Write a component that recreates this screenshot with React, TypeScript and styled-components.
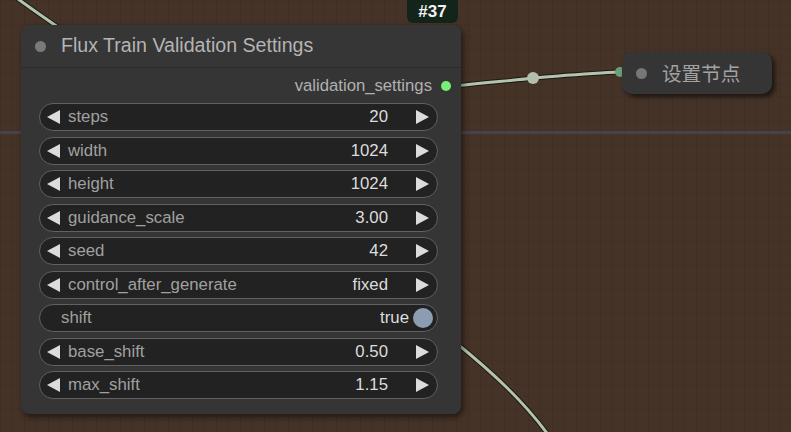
import React from "react";
import styled, { createGlobalStyle } from "styled-components";

const Global = createGlobalStyle`
  html, body { margin: 0; padding: 0; background: #463328; }
  body { font-family: "Liberation Sans", Arial, "Noto Sans CJK SC", sans-serif; }
`;

const Canvas = styled.div`
  position: relative;
  width: 791px;
  height: 432px;
  overflow: hidden;
  background-color: #463328;
  background-image:
    linear-gradient(to bottom, transparent 131px, rgba(70, 72, 92, 0.75) 131px, rgba(70, 72, 92, 0.75) 134px, transparent 134px),
    repeating-linear-gradient(to right, rgba(0, 0, 0, 0.08) 0 1px, transparent 1px 12px),
    repeating-linear-gradient(to bottom, rgba(0, 0, 0, 0.05) 0 1px, transparent 1px 12px);
`;

const Links = styled.svg`
  position: absolute;
  left: 0;
  top: 0;
  width: 791px;
  height: 432px;
`;

const Node = styled.div`
  position: absolute;
  left: 21px;
  top: 25px;
  width: 440px;
  height: 389px;
  box-sizing: border-box;
  background: #353535;
  border-radius: 8px;
  box-shadow: 2px 3px 6px rgba(0, 0, 0, 0.55);
  display: flex;
  flex-direction: column;
`;

const Badge = styled.div`
  position: absolute;
  left: 407px;
  top: -4px;
  width: 51px;
  height: 27px;
  box-sizing: border-box;
  padding-top: 4px;
  background: #13241a;
  border-radius: 6px;
  color: #f2f2f2;
  font-weight: bold;
  font-size: 17px;
  display: flex;
  align-items: center;
  justify-content: center;
`;

const Title = styled.div`
  height: 42px;
  display: flex;
  align-items: center;
  padding-left: 14px;
  gap: 15px;
  border-bottom: 1px solid #2c2c2c;
  border-radius: 8px 8px 0 0;
  background: #363636;
`;

const Dot = styled.div<{ $color: string; $size: number }>`
  width: ${(p) => p.$size}px;
  height: ${(p) => p.$size}px;
  border-radius: 50%;
  background: ${(p) => p.$color};
  flex: none;
`;

const TitleText = styled.span`
  color: #b4b4b4;
  font-size: 19.6px;
  margin-top: -2px;
`;

const OutputRow = styled.div`
  height: 35px;
  display: flex;
  align-items: center;
  justify-content: flex-end;
  padding-right: 10px;
  gap: 9px;
  color: #b0b0b0;
  font-size: 16.7px;
`;

const Widgets = styled.div`
  display: flex;
  flex-direction: column;
  gap: 5.5px;
  padding-left: 18px;
  width: 399px;
`;

const Widget = styled.div`
  height: 28px;
  box-sizing: border-box;
  border: 1px solid #616161;
  border-radius: 14px;
  background: #222222;
  display: flex;
  align-items: center;
  padding: 0 7px 0 6px;
  font-size: 16.8px;
`;

const Arrow = styled.svg`
  width: 15px;
  height: 16px;
  flex: none;
`;

const Label = styled.span<{ $indent?: boolean }>`
  color: #a0a0a0;
  margin-left: ${(p) => (p.$indent ? "15px" : "7px")};
  flex: 1;
  white-space: nowrap;
`;

const Value = styled.span<{ $gap: number }>`
  color: #dcdcdc;
  margin-right: ${(p) => p.$gap}px;
`;

const Toggle = styled.div`
  width: 20px;
  height: 20px;
  border-radius: 50%;
  background: #8d9db1;
  margin-left: 4px;
  margin-right: -3px;
`;

const Collapsed = styled.div`
  position: absolute;
  left: 622px;
  top: 52px;
  width: 150px;
  height: 42px;
  box-sizing: border-box;
  background: #353535;
  border-radius: 10px;
  box-shadow: 3px 3px 5px rgba(0, 0, 0, 0.6);
  display: flex;
  align-items: center;
  padding-left: 14px;
  gap: 15px;
`;

const CollapsedText = styled.span`
  color: #a2a2a2;
  font-size: 19.6px;
  font-family: "Noto Sans CJK SC", sans-serif;
  margin-top: -2px;
`;

const Left = () => (
  <Arrow viewBox="0 0 15 16">
    <polygon points="14,1 14,15 1,8" fill="#dcdcdc" />
  </Arrow>
);
const Right = () => (
  <Arrow viewBox="0 0 15 16">
    <polygon points="1,1 1,15 14,8" fill="#dcdcdc" />
  </Arrow>
);

const rows = [
  { label: "steps", value: "20" },
  { label: "width", value: "1024" },
  { label: "height", value: "1024" },
  { label: "guidance_scale", value: "3.00" },
  { label: "seed", value: "42" },
  { label: "control_after_generate", value: "fixed" },
  { label: "shift", value: "true", toggle: true },
  { label: "base_shift", value: "0.50" },
  { label: "max_shift", value: "1.15" },
];

export default function App() {
  return (
    <>
      <Global />
      <Canvas>
        <Links viewBox="0 0 791 432">
          <g fill="none" strokeLinecap="round">
            <path d="M14 -4 C 30 8, 45 18, 62 30" stroke="#1c1a14" strokeWidth="5" />
            <path d="M14 -4 C 30 8, 45 18, 62 30" stroke="#b3c3ad" strokeWidth="3" />
            <path d="M455 86 C 490 82, 520 80, 533 78 C 560 76, 590 73, 620 72" stroke="#1c1a14" strokeWidth="5" />
            <path d="M455 86 C 490 82, 520 80, 533 78 C 560 76, 590 73, 620 72" stroke="#b3c3ad" strokeWidth="3" />
            <path d="M455 342 C 492 372, 525 402, 552 440" stroke="#1c1a14" strokeWidth="5" />
            <path d="M455 342 C 492 372, 525 402, 552 440" stroke="#b3c3ad" strokeWidth="3" />
          </g>
          <circle cx="533" cy="78" r="6" fill="#b2bfab" />
          <circle cx="620" cy="72" r="5" fill="#6b9f7c" />
        </Links>
        <Badge>#37</Badge>
        <Node>
          <Title>
            <Dot $color="#7a7a7a" $size={11} />
            <TitleText>Flux Train Validation Settings</TitleText>
          </Title>
          <OutputRow>
            validation_settings
            <Dot $color="#77ee77" $size={10} />
          </OutputRow>
          <Widgets>
            {rows.map((r) => (
              <Widget key={r.label}>
                {r.toggle ? null : <Left />}
                <Label $indent={r.toggle}>{r.label}</Label>
                <Value $gap={r.toggle ? 0 : 27}>{r.value}</Value>
                {r.toggle ? <Toggle /> : <Right />}
              </Widget>
            ))}
          </Widgets>
        </Node>
        <Collapsed>
          <Dot $color="#777777" $size={11} />
          <CollapsedText>设置节点</CollapsedText>
        </Collapsed>
      </Canvas>
    </>
  );
}
